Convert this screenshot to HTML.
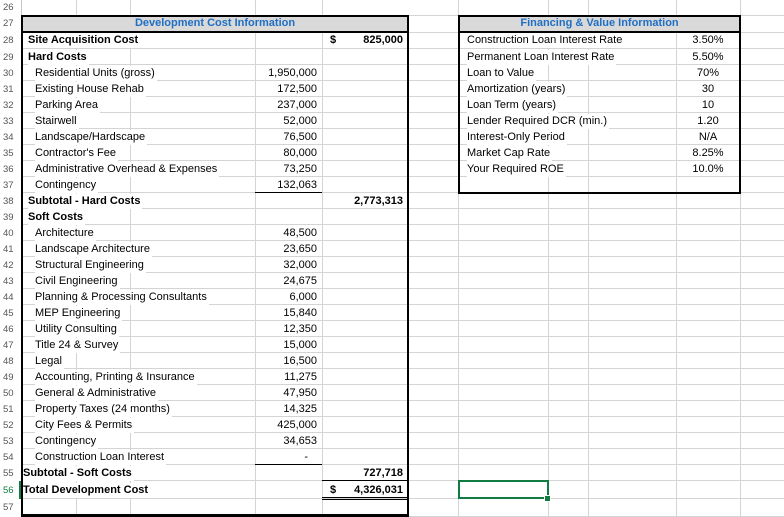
<!DOCTYPE html>
<html><head><meta charset="utf-8"><style>
*{margin:0;padding:0;box-sizing:border-box}
body{width:784px;height:517px;position:relative;background:#fff;overflow:hidden;font-family:"Liberation Sans",Arial,sans-serif;font-size:11px;color:#000}
.h{position:absolute;left:21px;width:763px;height:1px;background:#d4d4d4}
.v{position:absolute;top:0;width:1px;height:517px;background:#d4d4d4}
.rep{position:absolute;left:21px;width:763px;top:48px;height:434px;background:repeating-linear-gradient(to bottom,#d4d4d4 0,#d4d4d4 1px,transparent 1px,transparent 16px)}
.t{position:absolute;height:15px;line-height:15px;background:#fff;white-space:nowrap;padding-right:2px}
.r{position:absolute;height:15px;line-height:15px;text-align:right;white-space:nowrap}
.c{position:absolute;height:15px;line-height:15px;text-align:center;white-space:nowrap}
.b{font-weight:bold}
.n{position:absolute;left:3px;width:16px;height:15px;line-height:15px;font-size:9.5px;color:#555}
</style></head><body>
<div class="h" style="top:15px"></div>
<div class="h" style="top:32px"></div>
<div class="rep"></div>
<div class="h" style="top:498px"></div>
<div class="h" style="top:516px"></div>
<div class="v" style="left:21px;background:#c8c8c8"></div>
<div class="v" style="left:76px"></div>
<div class="v" style="left:130px"></div>
<div class="v" style="left:255px"></div>
<div class="v" style="left:322px"></div>
<div class="v" style="left:458px"></div>
<div class="v" style="left:548px"></div>
<div class="v" style="left:588px"></div>
<div class="v" style="left:676px"></div>
<div class="v" style="left:740px"></div>

<div class="n" style="top:0">26</div>
<div class="n" style="top:16px">27</div>
<div class="n" style="top:33px">28</div>
<div class="n" style="top:50px">29</div>
<div class="n" style="top:66px">30</div>
<div class="n" style="top:82px">31</div>
<div class="n" style="top:98px">32</div>
<div class="n" style="top:114px">33</div>
<div class="n" style="top:130px">34</div>
<div class="n" style="top:146px">35</div>
<div class="n" style="top:162px">36</div>
<div class="n" style="top:178px">37</div>
<div class="n" style="top:194px">38</div>
<div class="n" style="top:210px">39</div>
<div class="n" style="top:226px">40</div>
<div class="n" style="top:242px">41</div>
<div class="n" style="top:258px">42</div>
<div class="n" style="top:274px">43</div>
<div class="n" style="top:290px">44</div>
<div class="n" style="top:306px">45</div>
<div class="n" style="top:322px">46</div>
<div class="n" style="top:338px">47</div>
<div class="n" style="top:354px">48</div>
<div class="n" style="top:370px">49</div>
<div class="n" style="top:386px">50</div>
<div class="n" style="top:402px">51</div>
<div class="n" style="top:418px">52</div>
<div class="n" style="top:434px">53</div>
<div class="n" style="top:450px">54</div>
<div class="n" style="top:466px">55</div>
<div class="n" style="top:483px;color:#107c41">56</div>
<div class="n" style="top:500px">57</div>
<div style="position:absolute;left:19px;top:481px;width:2px;height:18px;background:#107c41"></div>

<div style="position:absolute;left:21px;top:15px;width:388px;height:502px;border:2px solid #000;border-bottom-width:3px"></div>
<div style="position:absolute;left:23px;top:17px;width:384px;height:14px;background:#d9d9d9"></div>
<div style="position:absolute;left:21px;top:31px;width:388px;height:2px;background:#000"></div>
<div class="c b" style="left:23px;top:16px;width:384px;color:#1f6fc4">Development Cost Information</div>

<div class="t b" style="left:28px;top:33px">Site Acquisition Cost</div>
<div class="r b" style="left:330px;top:33px">$</div>
<div class="r b" style="left:330px;top:33px;width:73px">825,000</div>
<div class="t b" style="left:28px;top:50px">Hard Costs</div>
<div class="t" style="left:35px;top:66px">Residential Units (gross)</div><div class="r" style="left:255px;top:66px;width:62px">1,950,000</div>
<div class="t" style="left:35px;top:82px">Existing House Rehab</div><div class="r" style="left:255px;top:82px;width:62px">172,500</div>
<div class="t" style="left:35px;top:98px">Parking Area</div><div class="r" style="left:255px;top:98px;width:62px">237,000</div>
<div class="t" style="left:35px;top:114px">Stairwell</div><div class="r" style="left:255px;top:114px;width:62px">52,000</div>
<div class="t" style="left:35px;top:130px">Landscape/Hardscape</div><div class="r" style="left:255px;top:130px;width:62px">76,500</div>
<div class="t" style="left:35px;top:146px">Contractor's Fee</div><div class="r" style="left:255px;top:146px;width:62px">80,000</div>
<div class="t" style="left:35px;top:162px">Administrative Overhead &amp; Expenses</div><div class="r" style="left:255px;top:162px;width:62px">73,250</div>
<div class="t" style="left:35px;top:178px">Contingency</div><div class="r" style="left:255px;top:178px;width:62px">132,063</div>
<div style="position:absolute;left:255px;top:192px;width:67px;height:1px;background:#000"></div>
<div class="t b" style="left:28px;top:194px">Subtotal - Hard Costs</div><div class="r b" style="left:330px;top:194px;width:73px">2,773,313</div>
<div class="t b" style="left:28px;top:210px">Soft Costs</div>
<div class="t" style="left:35px;top:226px">Architecture</div><div class="r" style="left:255px;top:226px;width:62px">48,500</div>
<div class="t" style="left:35px;top:242px">Landscape Architecture</div><div class="r" style="left:255px;top:242px;width:62px">23,650</div>
<div class="t" style="left:35px;top:258px">Structural Engineering</div><div class="r" style="left:255px;top:258px;width:62px">32,000</div>
<div class="t" style="left:35px;top:274px">Civil Engineering</div><div class="r" style="left:255px;top:274px;width:62px">24,675</div>
<div class="t" style="left:35px;top:290px">Planning &amp; Processing Consultants</div><div class="r" style="left:255px;top:290px;width:62px">6,000</div>
<div class="t" style="left:35px;top:306px">MEP Engineering</div><div class="r" style="left:255px;top:306px;width:62px">15,840</div>
<div class="t" style="left:35px;top:322px">Utility Consulting</div><div class="r" style="left:255px;top:322px;width:62px">12,350</div>
<div class="t" style="left:35px;top:338px">Title 24 &amp; Survey</div><div class="r" style="left:255px;top:338px;width:62px">15,000</div>
<div class="t" style="left:35px;top:354px">Legal</div><div class="r" style="left:255px;top:354px;width:62px">16,500</div>
<div class="t" style="left:35px;top:370px">Accounting, Printing &amp; Insurance</div><div class="r" style="left:255px;top:370px;width:62px">11,275</div>
<div class="t" style="left:35px;top:386px">General &amp; Administrative</div><div class="r" style="left:255px;top:386px;width:62px">47,950</div>
<div class="t" style="left:35px;top:402px">Property Taxes (24 months)</div><div class="r" style="left:255px;top:402px;width:62px">14,325</div>
<div class="t" style="left:35px;top:418px">City Fees &amp; Permits</div><div class="r" style="left:255px;top:418px;width:62px">425,000</div>
<div class="t" style="left:35px;top:434px">Contingency</div><div class="r" style="left:255px;top:434px;width:62px">34,653</div>
<div class="t" style="left:35px;top:450px">Construction Loan Interest</div><div class="r" style="left:255px;top:450px;width:53px">-</div>
<div style="position:absolute;left:255px;top:464px;width:67px;height:1px;background:#000"></div>
<div class="t b" style="left:23px;top:466px">Subtotal - Soft Costs</div><div class="r b" style="left:330px;top:466px;width:73px">727,718</div>
<div style="position:absolute;left:322px;top:480px;width:85px;height:1px;background:#000"></div>
<div class="t b" style="left:23px;top:483px">Total Development Cost</div>
<div class="r b" style="left:330px;top:483px">$</div>
<div class="r b" style="left:330px;top:483px;width:73px">4,326,031</div>
<div style="position:absolute;left:322px;top:497px;width:85px;height:1px;background:#000"></div>
<div style="position:absolute;left:322px;top:499px;width:85px;height:1px;background:#000"></div>

<div style="position:absolute;left:458px;top:15px;width:283px;height:179px;border:2px solid #000"></div>
<div style="position:absolute;left:460px;top:17px;width:279px;height:14px;background:#d9d9d9"></div>
<div style="position:absolute;left:458px;top:31px;width:283px;height:2px;background:#000"></div>
<div class="c b" style="left:460px;top:16px;width:279px;color:#1f6fc4">Financing &amp; Value Information</div>
<div class="t" style="left:467px;top:33px">Construction Loan Interest Rate</div><div class="c" style="left:676px;top:33px;width:64px">3.50%</div>
<div class="t" style="left:467px;top:50px">Permanent Loan Interest Rate</div><div class="c" style="left:676px;top:50px;width:64px">5.50%</div>
<div class="t" style="left:467px;top:66px">Loan to Value</div><div class="c" style="left:676px;top:66px;width:64px">70%</div>
<div class="t" style="left:467px;top:82px">Amortization (years)</div><div class="c" style="left:676px;top:82px;width:64px">30</div>
<div class="t" style="left:467px;top:98px">Loan Term (years)</div><div class="c" style="left:676px;top:98px;width:64px">10</div>
<div class="t" style="left:467px;top:114px">Lender Required DCR (min.)</div><div class="c" style="left:676px;top:114px;width:64px">1.20</div>
<div class="t" style="left:467px;top:130px">Interest-Only Period</div><div class="c" style="left:676px;top:130px;width:64px">N/A</div>
<div class="t" style="left:467px;top:146px">Market Cap Rate</div><div class="c" style="left:676px;top:146px;width:64px">8.25%</div>
<div class="t" style="left:467px;top:162px">Your Required ROE</div><div class="c" style="left:676px;top:162px;width:64px">10.0%</div>

<div style="position:absolute;left:458px;top:480px;width:91px;height:19px;border:2px solid #107c41"></div>
<div style="position:absolute;left:545px;top:496px;width:5px;height:5px;background:#107c41;outline:1px solid #fff"></div>
</body></html>
